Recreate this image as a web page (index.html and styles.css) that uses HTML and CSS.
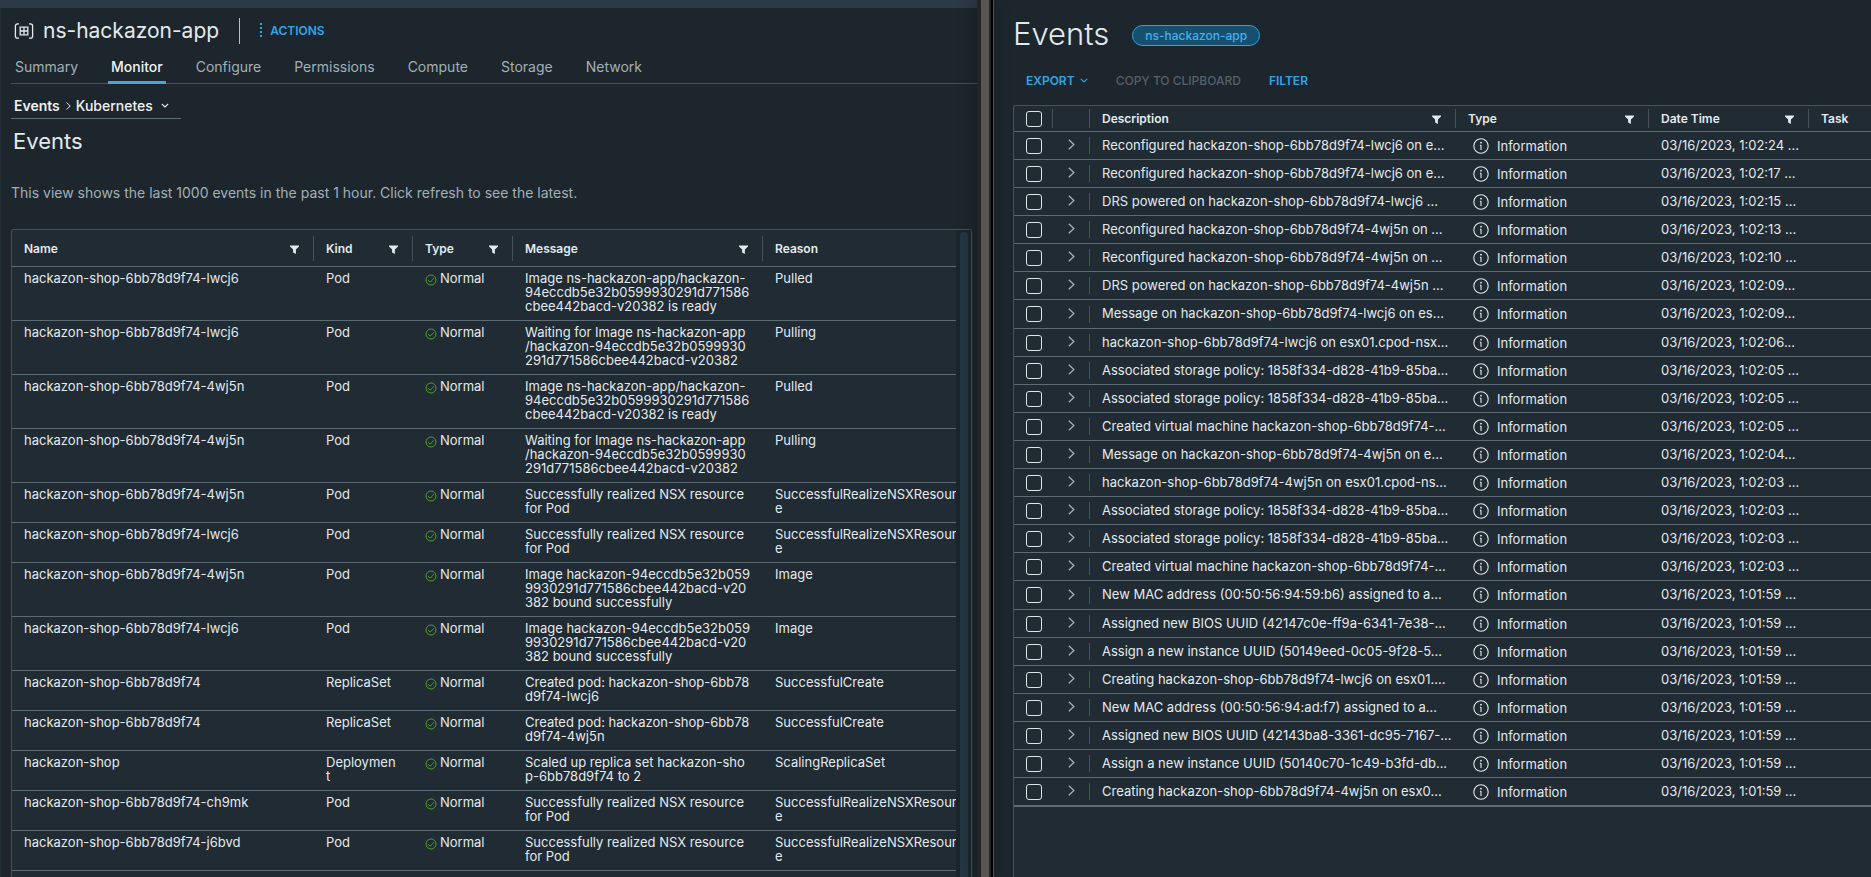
FILE: index.html
```
<!DOCTYPE html>
<html lang="en">
<head>
<meta charset="utf-8">
<title>ns-hackazon-app - Events</title>
<link rel="stylesheet" href="styles.css">
</head>
<body>
<svg class="sprite" aria-hidden="true">
  <symbol id="i-filter" viewBox="0 0 9 9"><path d="M0 0.5H9V1.6L5.9 4.6V9L3.1 7.6V4.6L0 1.6Z" fill="currentColor"/></symbol>
  <symbol id="i-ok" viewBox="0 0 12 12"><circle cx="6" cy="6" r="5" fill="none" stroke="currentColor"/><path d="M3.2 6.3L5.2 8.2L8.9 4.3" fill="none" stroke="currentColor"/></symbol>
  <symbol id="i-info" viewBox="0 0 16 16"><circle cx="8" cy="8" r="7.2" fill="none" stroke="currentColor" stroke-width="1.1"/><circle cx="8" cy="4.7" r="0.9" fill="currentColor"/><path d="M8 7V12M6.9 7.2H8" fill="none" stroke="currentColor" stroke-width="1.1"/></symbol>
  <symbol id="i-right" viewBox="0 0 7 11"><path d="M0.8 0.7L5.9 5.5L0.8 10.3" fill="none" stroke="currentColor" stroke-width="1.3"/></symbol>
  <symbol id="i-down" viewBox="0 0 8 5"><path d="M0.8 0.8L4 4L7.2 0.8" fill="none" stroke="currentColor" stroke-width="1.1"/></symbol>
</svg>
<div class="split">
  <main class="pane">
    <div class="topbar"></div>
    <header class="object">
      <svg class="object-icon" viewBox="0 0 20 16" fill="none" stroke="currentColor" stroke-width="1.3"><path d="M5 0.8H3.6Q1.4 0.8 1.4 3V13Q1.4 15.2 3.6 15.2H5M15 0.8H16.4Q18.6 0.8 18.6 3V13Q18.6 15.2 16.4 15.2H15"/><path d="M6.2 4.2H13.8V11.8H6.2ZM10 4.2V11.8M6.2 8H13.8"/></svg>
      <h1 class="object-name">ns-hackazon-app</h1>
      <button class="actions" type="button"><svg width="3" height="15" viewBox="0 0 3 15" fill="currentColor"><path d="M0 0H2V2H0ZM0 4H2V6H0ZM0 8H2V10H0ZM0 12H2V14H0Z"/></svg>ACTIONS</button>
    </header>
    <nav class="tabs">
      <a class="tab" href="#">Summary</a>
      <a class="tab tab-active" href="#">Monitor</a>
      <a class="tab" href="#">Configure</a>
      <a class="tab" href="#">Permissions</a>
      <a class="tab" href="#">Compute</a>
      <a class="tab" href="#">Storage</a>
      <a class="tab" href="#">Network</a>
    </nav>
    <div class="crumbs">
      <strong>Events</strong>
      <svg class="crumb-arrow" width="5" height="8" viewBox="0 0 7 11"><use href="#i-right"/></svg>
      <button class="crumb-menu" type="button">Kubernetes<svg width="8" height="5"><use href="#i-down"/></svg></button>
    </div>
    <h2 class="view-title">Events</h2>
    <p class="view-note">This view shows the last 1000 events in the past 1 hour. Click refresh to see the latest.</p>
    <div class="grid-box pod-box">
      <div class="pod-scroll">
        <table class="grid pods">
          <colgroup><col class="c-name"><col class="c-kind"><col class="c-status"><col class="c-message"><col></colgroup>
          <thead><tr id="pod-head"></tr></thead>
          <tbody id="pod-rows"></tbody>
        </table>
      </div>
      <div class="scrollbar"><div class="thumb"></div></div>
    </div>
  </main>
  <div class="divider"></div>
  <section class="pane events-pane">
    <header class="events-head">
      <h1 class="events-title">Events</h1>
      <span class="badge">ns-hackazon-app</span>
    </header>
    <div class="toolbar">
      <button class="tool" type="button">EXPORT<svg width="8" height="5"><use href="#i-down"/></svg></button>
      <button class="tool" type="button" disabled>COPY TO CLIPBOARD</button>
      <button class="tool" type="button">FILTER</button>
    </div>
    <div class="grid-box log-box">
      <table class="grid log">
        <colgroup><col class="c-check"><col class="c-expand"><col class="c-desc"><col class="c-type"><col class="c-date"><col></colgroup>
        <thead><tr id="log-head"></tr></thead>
        <tbody id="log-rows"></tbody>
      </table>
    </div>
  </section>
</div>
<script src="app.js"></script>
</body>
</html>
```
FILE: app.js
```
const icon = (name, w, h, cls) =>
  `<svg class="${cls}" width="${w}" height="${h}" aria-hidden="true"><use href="#i-${name}"/></svg>`;

const headCell = (label, filter = true) =>
  `<th><div class="head">${label}${filter ? `<button class="filter" type="button" aria-label="Filter ${label}">${icon("filter", 9, 9, "icon")}</button>` : ""}</div></th>`;

const shop = "hackazon-shop-6bb78d9f74";
const ready = "Image ns-hackazon-app/hackazon-<br>94eccdb5e32b0599930291d771586<br>cbee442bacd-v20382 is ready";
const waiting = "Waiting for Image ns-hackazon-app<br>/hackazon-94eccdb5e32b0599930<br>291d771586cbee442bacd-v20382";
const realized = "Successfully realized NSX resource<br>for Pod";
const bound = "Image hackazon-94eccdb5e32b059<br>9930291d771586cbee442bacd-v20<br>382 bound successfully";
const nsx = "SuccessfulRealizeNSXResourc<br>e";

const pods = [
  [shop + "-lwcj6", "Pod", ready, "Pulled"],
  [shop + "-lwcj6", "Pod", waiting, "Pulling"],
  [shop + "-4wj5n", "Pod", ready, "Pulled"],
  [shop + "-4wj5n", "Pod", waiting, "Pulling"],
  [shop + "-4wj5n", "Pod", realized, nsx],
  [shop + "-lwcj6", "Pod", realized, nsx],
  [shop + "-4wj5n", "Pod", bound, "Image"],
  [shop + "-lwcj6", "Pod", bound, "Image"],
  [shop, "ReplicaSet", "Created pod: hackazon-shop-6bb78<br>d9f74-lwcj6", "SuccessfulCreate"],
  [shop, "ReplicaSet", "Created pod: hackazon-shop-6bb78<br>d9f74-4wj5n", "SuccessfulCreate"],
  ["hackazon-shop", "Deploymen<br>t", "Scaled up replica set hackazon-sho<br>p-6bb78d9f74 to 2", "ScalingReplicaSet"],
  [shop + "-ch9mk", "Pod", realized, nsx],
  [shop + "-j6bvd", "Pod", realized, nsx]
];

const log = [
  ["Reconfigured hackazon-shop-6bb78d9f74-lwcj6 on e...", "1:02:24 ..."],
  ["Reconfigured hackazon-shop-6bb78d9f74-lwcj6 on e...", "1:02:17 ..."],
  ["DRS powered on hackazon-shop-6bb78d9f74-lwcj6 ...", "1:02:15 ..."],
  ["Reconfigured hackazon-shop-6bb78d9f74-4wj5n on ...", "1:02:13 ..."],
  ["Reconfigured hackazon-shop-6bb78d9f74-4wj5n on ...", "1:02:10 ..."],
  ["DRS powered on hackazon-shop-6bb78d9f74-4wj5n ...", "1:02:09..."],
  ["Message on hackazon-shop-6bb78d9f74-lwcj6 on es...", "1:02:09..."],
  ["hackazon-shop-6bb78d9f74-lwcj6 on esx01.cpod-nsx...", "1:02:06..."],
  ["Associated storage policy: 1858f334-d828-41b9-85ba...", "1:02:05 ..."],
  ["Associated storage policy: 1858f334-d828-41b9-85ba...", "1:02:05 ..."],
  ["Created virtual machine hackazon-shop-6bb78d9f74-...", "1:02:05 ..."],
  ["Message on hackazon-shop-6bb78d9f74-4wj5n on e...", "1:02:04..."],
  ["hackazon-shop-6bb78d9f74-4wj5n on esx01.cpod-ns...", "1:02:03 ..."],
  ["Associated storage policy: 1858f334-d828-41b9-85ba...", "1:02:03 ..."],
  ["Associated storage policy: 1858f334-d828-41b9-85ba...", "1:02:03 ..."],
  ["Created virtual machine hackazon-shop-6bb78d9f74-...", "1:02:03 ..."],
  ["New MAC address (00:50:56:94:59:b6) assigned to a...", "1:01:59 ..."],
  ["Assigned new BIOS UUID (42147c0e-ff9a-6341-7e38-...", "1:01:59 ..."],
  ["Assign a new instance UUID (50149eed-0c05-9f28-5...", "1:01:59 ..."],
  ["Creating hackazon-shop-6bb78d9f74-lwcj6 on esx01....", "1:01:59 ..."],
  ["New MAC address (00:50:56:94:ad:f7) assigned to a...", "1:01:59 ..."],
  ["Assigned new BIOS UUID (42143ba8-3361-dc95-7167-...", "1:01:59 ..."],
  ["Assign a new instance UUID (50140c70-1c49-b3fd-db...", "1:01:59 ..."],
  ["Creating hackazon-shop-6bb78d9f74-4wj5n on esx0...", "1:01:59 ..."]
];

document.getElementById("pod-head").innerHTML =
  ["Name", "Kind", "Type", "Message"].map(l => headCell(l)).join("") + headCell("Reason", false);

document.getElementById("pod-rows").innerHTML = pods.map(([name, kind, message, reason]) =>
  `<tr><td>${name}</td><td>${kind}</td><td><span class="status">${icon("ok", 12, 12, "ok")}Normal</span></td><td>${message}</td><td>${reason}</td></tr>`
).join("");

document.getElementById("log-head").innerHTML =
  `<th class="tight"><div class="head"><input class="check" type="checkbox" aria-label="Select all"></div></th><th class="tight"><div class="head"></div></th>` +
  ["Description", "Type", "Date Time"].map(l => headCell(l)).join("") + headCell("Task", false);

document.getElementById("log-rows").innerHTML = log.map(([text, time], i) =>
  `<tr><td class="tight"><input class="check" type="checkbox" aria-label="Select event ${i + 1}"></td>` +
  `<td class="tight"><button class="expand" type="button" aria-label="Expand">${icon("right", 7, 11, "icon")}</button></td>` +
  `<td class="text">${text}</td><td><span class="info">${icon("info", 16, 16, "icon")}Information</span></td><td class="text">03/16/2023, ${time}</td><td></td></tr>`
).join("");
```
FILE: styles.css
```
* { box-sizing: border-box; }

body {
  margin: 0;
  background: #1c262c;
  color: #e3eaee;
  font-family: Inter, "Liberation Sans", sans-serif;
  font-size: 13px;
}

h1, h2, p { margin: 0; font-weight: 400; }

button {
  padding: 0;
  border: 0;
  background: none;
  color: inherit;
  font: inherit;
}

svg { display: block; flex: none; }
.sprite { position: absolute; width: 0; height: 0; }

.split {
  display: grid;
  grid-template-columns: minmax(0, 977fr) 17px minmax(0, 877fr);
  height: 100vh;
  overflow: hidden;
}

.pane {
  display: flex;
  flex-direction: column;
  min-height: 0;
  overflow: hidden;
  padding-left: 11px;
  box-shadow: inset 1px 0 #232f37;
}

.divider {
  z-index: 1;
  border-left: 4px solid #242424;
  border-right: 1px solid #46525a;
  background: linear-gradient(90deg, #565656 8px, #242424 8px, #242424 10px, #000 10px);
  box-shadow: -2px 0 16px rgba(8, 14, 20, 0.35);
}

.topbar { flex: none; height: 8px; margin-left: -11px; background: #2c3947; }

.object {
  display: flex;
  align-items: center;
  height: 46px;
  padding: 0 0 0 3px;
}
.object-icon { width: 20px; height: 16px; }
.object-name {
  margin-left: 9px;
  padding-right: 20px;
  border-right: 1px solid #b4bfc5;
  font-size: 21px;
  line-height: 26px;
}
.actions {
  display: flex;
  align-items: center;
  gap: 7px;
  margin-left: 20px;
  padding-bottom: 2px;
  color: #32a5e7;
  font-size: 12px;
  font-weight: 600;
}

.tabs {
  display: flex;
  flex: none;
  gap: 27px;
  padding-left: 1px;
  border-bottom: 1px solid #44525a;
}
.tab {
  height: 30px;
  margin-bottom: -1px;
  padding: 0 3px;
  color: #a3b0b7;
  font-size: 14px;
  line-height: 25px;
  text-decoration: none;
}
.tab-active { border-bottom: 3px solid #49a5d8; color: #eef3f5; font-weight: 500; }

.crumbs {
  display: flex;
  align-items: center;
  flex: none;
  align-self: flex-start;
  width: 170px;
  height: 35px;
  padding: 8px 0 0 3px;
  border-bottom: 1px solid #61717a;
  color: #eef3f5;
  font-size: 14px;
}
.crumbs strong { font-weight: 600; }
.crumb-arrow { margin: 2px 5px 0 6px; }
.crumb-menu { display: flex; align-items: center; gap: 8px; font-weight: 500; }

.view-title { margin-top: 8px; padding-left: 2px; font-size: 22px; line-height: 28px; }
.view-note { margin: 29px 0 27px; color: #a3b0b7; font-size: 14px; line-height: 18px; }

.grid-box {
  flex: 1;
  min-height: 0;
  overflow: hidden;
  border: 1px solid #44525a;
  border-bottom: 0;
  border-radius: 3px 3px 0 0;
  background: #202b33;
}
.pod-box { display: flex; margin-right: 5px; }
.pod-scroll { flex: 1; min-width: 0; overflow: hidden; }
.scrollbar { width: 15px; padding: 2px 3px 0 4px; background: #1b252c; }
.thumb { height: 100%; border-radius: 4px 4px 0 0; background: #243743; }

.grid { width: 100%; table-layout: fixed; border-collapse: separate; border-spacing: 0; }
.grid th, .grid td {
  padding: 0 0 0 12px;
  border-bottom: 1px solid #5d6c74;
  text-align: left;
  white-space: nowrap;
}
.head {
  display: flex;
  align-items: center;
  justify-content: space-between;
  padding-right: 14px;
  border-right: 1px solid #44525a;
  font-size: 12px;
  font-weight: 600;
}
.grid th:last-child .head { border-right: 0; }
.filter { padding-top: 2px; }

.c-name { width: 302px; }
.c-kind { width: 99px; }
.c-status { width: 100px; }
.c-message { width: 250px; }
.pods th { height: 37px; }
.pods .head { height: 25px; }
.pods td { padding-top: 4px; padding-bottom: 7px; line-height: 14px; vertical-align: top; }
.status { display: flex; gap: 3px; }
.ok { margin-top: 3px; color: #4fa12b; }

.events-pane { padding-left: 19px; box-shadow: none; }
.events-head { display: flex; align-items: center; gap: 23px; height: 70px; }
.events-title { padding-bottom: 2px; font-size: 31px; font-weight: 300; line-height: 38px; }
.badge {
  padding: 0 12px;
  border: 1px solid #32a5e7;
  border-radius: 11px;
  background: #17506f;
  color: #43b0ee;
  font-size: 12px;
  font-weight: 500;
  line-height: 19px;
}
.toolbar { display: flex; gap: 28px; height: 35px; padding: 0 0 14px 13px; }
.tool { display: flex; align-items: center; gap: 5px; color: #32a5e7; font-size: 12px; font-weight: 600; }
.tool:disabled { color: #56616a; font-weight: 500; }

.log-box { border-right: 0; border-top-right-radius: 0; }
.c-check { width: 39px; }
.c-expand { width: 37px; }
.c-desc { width: 366px; }
.c-type { width: 193px; }
.c-date { width: 160px; }
.log th { height: 26px; }
.log .head { height: 19px; }
.log tr { height: 28px; }
.log thead tr { height: 26px; }
.log tbody tr:nth-child(10n + 7), .log tbody tr:last-child { height: 29px; }
.log tbody tr:last-child td { border-bottom: 2px solid #5d6c74; }
.log .text { padding-bottom: 2px; }
.check {
  display: block;
  appearance: none;
  width: 16px;
  height: 16px;
  margin: 0;
  border: 1px solid #dde5e9;
  border-radius: 3px;
}
.log .tight .head { padding-right: 0; }
.expand {
  display: flex;
  align-items: center;
  width: 100%;
  height: 17px;
  padding: 0 0 2px 3px;
  border-right: 1px solid #44525a;
  color: #a3b0b7;
}
.info { display: flex; align-items: center; gap: 8px; padding-left: 5px; }
```
